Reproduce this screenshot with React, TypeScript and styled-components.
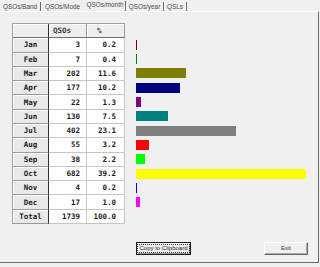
import React from 'react';
import styled, { createGlobalStyle } from 'styled-components';

const GlobalStyle = createGlobalStyle`
  html, body {
    margin: 0;
    padding: 0;
    background: #f0f0f0;
  }
  body {
    width: 320px;
    height: 267px;
    overflow: hidden;
    font-family: 'Liberation Sans', Arial, sans-serif;
  }
`;

const Window = styled.div`
  width: 320px;
  height: 267px;
  background: #f0f0f0;
  display: flex;
  flex-direction: column;
`;

const TabStrip = styled.div`
  display: flex;
  height: 11px;
`;

const Tab = styled.div<{ $w: number; $active?: boolean; $hideEdge?: boolean }>`
  width: ${(p) => p.$w}px;
  box-sizing: border-box;
  margin-top: ${(p) => (p.$active ? 1 : 2)}px;
  height: ${(p) => (p.$active ? 10 : 9)}px;
  line-height: ${(p) => (p.$active ? 8 : 9)}px;
  border-right: 1px solid ${(p) => (p.$hideEdge ? 'transparent' : '#6d6d6d')};
  text-align: center;
  font-size: 6.4px;
  color: #4a4a4a;
  white-space: nowrap;
  overflow: hidden;
`;

const Panel = styled.div`
  width: 319px;
  box-sizing: border-box;
  border-top: 1px solid #ffffff;
  border-right: 1px solid #6a6a6a;
  border-bottom: 1px solid #6a6a6a;
  padding: 11px 0 7px 12px;
  display: flex;
  flex-direction: column;
`;

const ChartArea = styled.div`
  display: flex;
`;

const Table = styled.div`
  display: grid;
  grid-template-columns: 36px 38px 38px;
  grid-template-rows: repeat(14, 1fr);
  height: 201px;
  border-top: 1px solid #a0a0a0;
  border-left: 1px solid #a0a0a0;
  box-sizing: border-box;
  font-family: 'DejaVu Sans Mono', 'Liberation Mono', monospace;
  font-weight: bold;
  font-size: 7.5px;
`;

type CellKind = 'corner' | 'head' | 'label' | 'data';

const Cell = styled.div<{ $kind: CellKind; $pad?: number }>`
  box-sizing: border-box;
  display: flex;
  align-items: center;
  white-space: nowrap;
  border-bottom: 1px solid
    ${(p) => (p.$kind === 'data' ? '#c6c6c6' : p.$kind === 'label' ? '#9a9a9a' : '#707070')};
  border-right: 1px solid
    ${(p) => (p.$kind === 'label' || p.$kind === 'corner' ? '#303030' : p.$kind === 'head' ? '#9a9a9a' : '#c6c6c6')};
  background: ${(p) => (p.$kind === 'data' ? '#ffffff' : p.$kind === 'label' ? '#e9e9e9' : '#eeeeee')};
  box-shadow: ${(p) => (p.$kind === 'data' ? 'none' : 'inset 1px 1px 0 #ffffff')};
  color: ${(p) => (p.$kind === 'head' ? '#3a3a3a' : '#1a1a1a')};
  justify-content: ${(p) =>
    p.$kind === 'label' ? 'center' : p.$kind === 'data' ? 'flex-end' : 'flex-start'};
  padding-left: ${(p) => (p.$kind === 'head' ? p.$pad ?? 0 : 0)}px;
  padding-right: ${(p) => (p.$kind === 'data' ? p.$pad ?? 0 : 0)}px;
`;

const Bars = styled.div`
  margin-left: 11px;
  display: grid;
  grid-template-rows: repeat(14, 1fr);
  height: 201px;
  width: 182px;
`;

const BarSlot = styled.div`
  display: flex;
  align-items: center;
`;

const Bar = styled.div<{ $color: string }>`
  height: 10px;
  background: ${(p) => p.$color};
`;

const ButtonRow = styled.div`
  display: flex;
  margin-top: 18px;
  padding-left: 124px;
  padding-right: 10px;
`;

const CopyButton = styled.div`
  width: 55px;
  height: 13px;
  box-sizing: border-box;
  border: 1px solid #1a1a1a;
  box-shadow: inset 1px 1px 0 #ffffff, inset -1px -1px 0 #9a9a9a;
  background: #ededed;
  display: flex;
  align-items: center;
  justify-content: center;
`;

const FocusLabel = styled.span`
  font-size: 6px;
  line-height: 7px;
  color: #2a2a2a;
  outline: 1px dotted #333333;
  padding: 0 1px;
  white-space: nowrap;
`;

const ExitButton = styled.div`
  margin-left: auto;
  width: 44px;
  height: 13px;
  box-sizing: border-box;
  border-top: 1px solid #ffffff;
  border-left: 1px solid #ffffff;
  border-right: 1px solid #6a6a6a;
  border-bottom: 1px solid #6a6a6a;
  box-shadow: inset -1px -1px 0 #a8a8a8;
  background: #f0f0f0;
  font-size: 6px;
  line-height: 11px;
  text-align: center;
  color: #333333;
`;

const tabs = [
  { label: 'QSOs/Band', w: 41 },
  { label: 'QSOs/Mode', w: 44, hideEdge: true },
  { label: 'QSOs/month', w: 41, active: true },
  { label: 'QSOs/year', w: 38 },
  { label: 'QSLs', w: 23 },
];

const months = [
  { m: 'Jan', qsos: 3, pct: '0.2', color: '#800000' },
  { m: 'Feb', qsos: 7, pct: '0.4', color: '#008000' },
  { m: 'Mar', qsos: 202, pct: '11.6', color: '#808000' },
  { m: 'Apr', qsos: 177, pct: '10.2', color: '#000080' },
  { m: 'May', qsos: 22, pct: '1.3', color: '#800080' },
  { m: 'Jun', qsos: 130, pct: '7.5', color: '#008080' },
  { m: 'Jul', qsos: 402, pct: '23.1', color: '#808080' },
  { m: 'Aug', qsos: 55, pct: '3.2', color: '#ff0000' },
  { m: 'Sep', qsos: 38, pct: '2.2', color: '#00ff00' },
  { m: 'Oct', qsos: 682, pct: '39.2', color: '#ffff00' },
  { m: 'Nov', qsos: 4, pct: '0.2', color: '#0000ff' },
  { m: 'Dec', qsos: 17, pct: '1.0', color: '#ff00ff' },
];

const App: React.FC = () => {
  const total = months.reduce((s, r) => s + r.qsos, 0);
  return (
    <Window>
      <GlobalStyle />
      <TabStrip>
        {tabs.map((t) => (
          <Tab key={t.label} $w={t.w} $active={t.active} $hideEdge={t.hideEdge}>
            {t.label}
          </Tab>
        ))}
      </TabStrip>
      <Panel>
        <ChartArea>
          <Table>
            <Cell $kind='corner' />
            <Cell $kind='head' $pad={4}>QSOs</Cell>
            <Cell $kind='head' $pad={10}>%</Cell>
            {months.map((r) => (
              <React.Fragment key={r.m}>
                <Cell $kind='label'>{r.m}</Cell>
                <Cell $kind='data' $pad={6}>{r.qsos}</Cell>
                <Cell $kind='data' $pad={8}>{r.pct}</Cell>
              </React.Fragment>
            ))}
            <Cell $kind='label'>Total</Cell>
            <Cell $kind='data' $pad={6}>{total}</Cell>
            <Cell $kind='data' $pad={8}>100.0</Cell>
          </Table>
          <Bars>
            <BarSlot />
            {months.map((r) => (
              <BarSlot key={r.m}>
                <Bar
                  $color={r.color}
                  style={{ width: Math.max(1, Math.floor(r.qsos / 4)) }}
                />
              </BarSlot>
            ))}
          </Bars>
        </ChartArea>
        <ButtonRow>
          <CopyButton>
            <FocusLabel>Copy to Clipboard</FocusLabel>
          </CopyButton>
          <ExitButton>Exit</ExitButton>
        </ButtonRow>
      </Panel>
    </Window>
  );
};

export default App;
